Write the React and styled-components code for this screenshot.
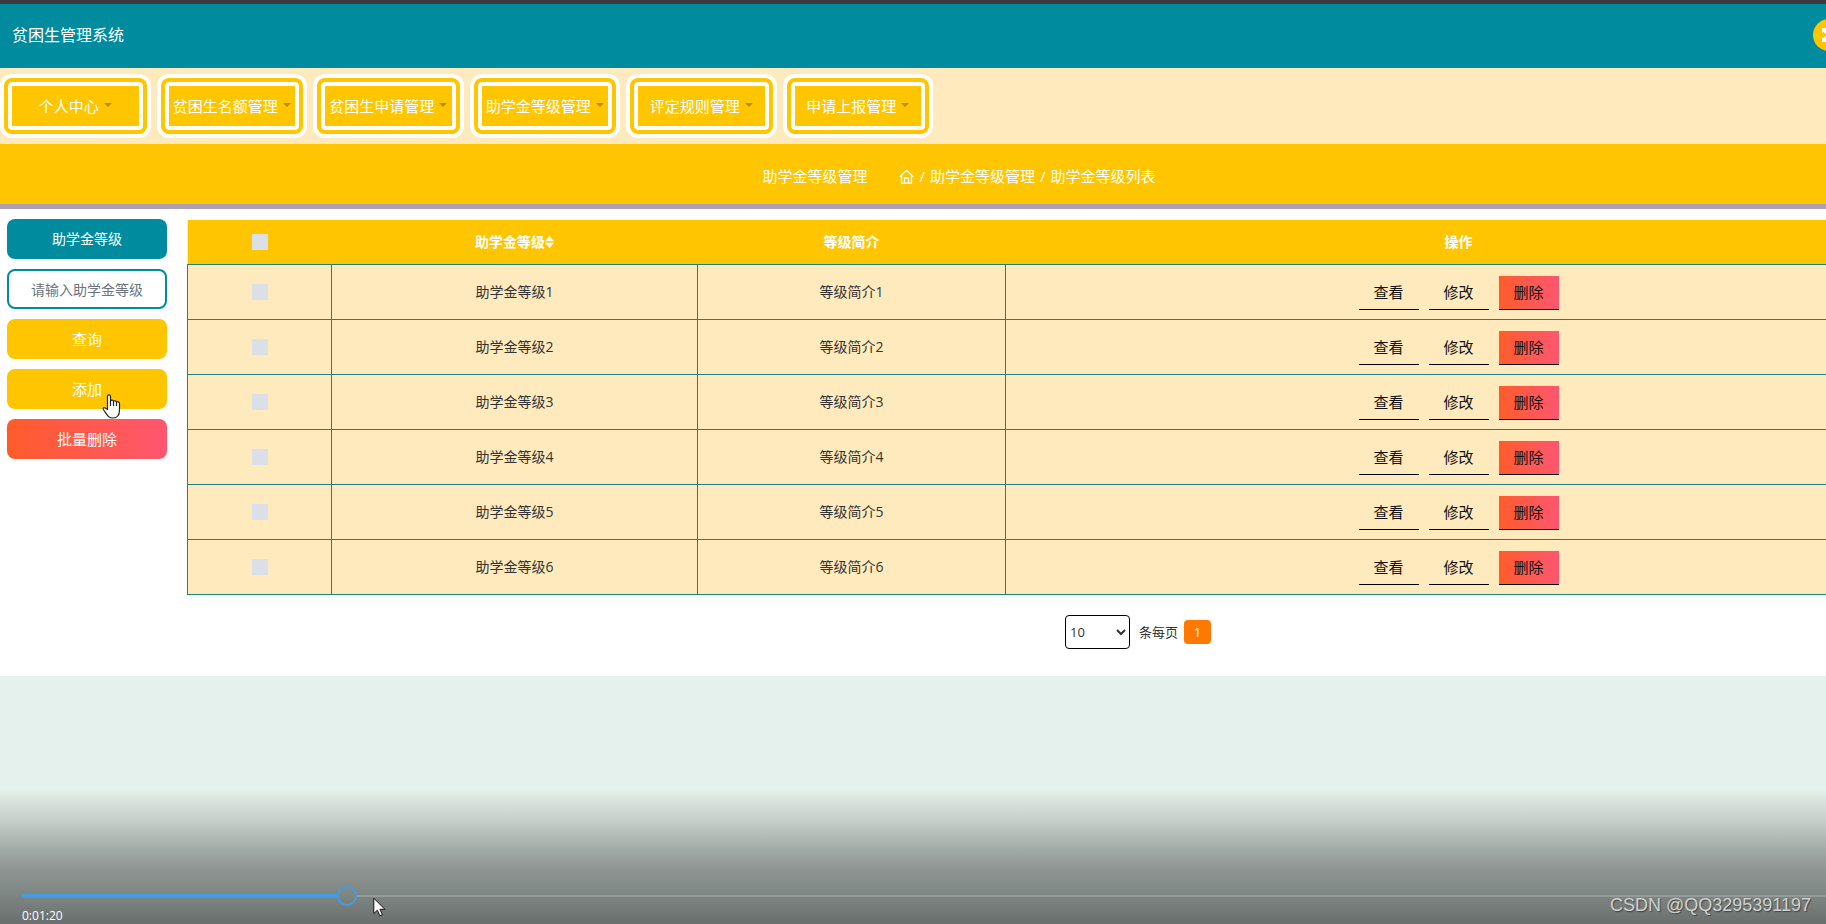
import React, { useState } from 'react';
import styled, { createGlobalStyle, css } from 'styled-components';

const teal = '#008c9e';
const yellow = '#ffc600';
const cream = '#feeabd';
const danger = 'linear-gradient(90deg, #ff5c2b, #ff5670)';

const GlobalStyle = createGlobalStyle`
  *, *::before, *::after { box-sizing: border-box; }
  html, body { margin: 0; }
  body {
    background: #e5f1ed;
    font-family: "Open Sans", "Noto Sans CJK SC", sans-serif;
    font-size: 14px;
    line-height: 20px;
    color: #333;
    overflow: hidden;
  }
  button, input, select { font: inherit; margin: 0; }
`;

const Screen = styled.div`
  position: relative;
  height: 100vh;
  overflow: hidden;
`;

const Page = styled.div`
  width: calc(100% + 94px);
`;

const TopStrip = styled.div`
  height: 4px;
  background: #3b393d;
`;

const Header = styled.header`
  display: flex;
  align-items: center;
  justify-content: space-between;
  height: 64px;
  padding: 0 75px 2px 12px;
  background: ${teal};
`;

const SiteTitle = styled.h1`
  margin: 0;
  font-size: 16px;
  font-weight: 400;
  color: #fff;
`;

const RoundButton = styled.button`
  display: grid;
  place-items: center;
  width: 32px;
  height: 32px;
  padding: 0;
  border: 0;
  border-radius: 50%;
  background: ${yellow};
  color: #fff;
`;

const NavBar = styled.nav`
  height: 76px;
  padding: 6px 0;
  background: ${cream};
`;

const NavList = styled.div`
  display: grid;
  grid-template-columns: repeat(6, 1fr);
  gap: 6px;
  max-width: 933px;
`;

const NavButton = styled.button`
  display: flex;
  align-items: center;
  justify-content: center;
  gap: 5px;
  height: 56px;
  margin: 4px;
  padding: 0;
  border: 4px solid ${yellow};
  border-radius: 8px;
  background: ${yellow};
  box-shadow: 0 0 0 4px #fff, inset 0 0 0 4px #fff;
  color: #fff;
  font-size: 15px;
  white-space: nowrap;
`;

const Caret = styled.span`
  margin-bottom: 2px;
  border: 4px solid transparent;
  border-top-color: #b98b1c;
  border-bottom: 0;
`;

const Crumbs = styled.div`
  display: flex;
  align-items: center;
  justify-content: center;
  gap: 32px;
  height: 65px;
  padding: 4px 2px 0 0;
  border-bottom: 5px solid #ad9fb0;
  background: ${yellow};
  color: #fff;
  font-size: 15px;
`;

const CrumbTrail = styled.nav`
  display: flex;
  align-items: center;
  gap: 5px;
`;

const CrumbLink = styled.a`
  display: flex;
  color: inherit;
  text-decoration: none;
`;

const Main = styled.main`
  display: flex;
  gap: 20px;
  padding: 10px 8px 26px 7px;
  background: #fff;
`;

const Side = styled.form`
  display: flex;
  flex-direction: column;
  flex: none;
  gap: 10px;
  width: 160px;
`;

const sideItem = css`
  width: 100%;
  height: 40px;
  padding: 0;
  border: 0;
  border-radius: 8px;
  text-align: center;
`;

const SideLabel = styled.label`
  ${sideItem}
  background: ${teal};
  color: #fff;
  line-height: 40px;
`;

const SideInput = styled.input`
  ${sideItem}
  border: 2px solid ${teal};
  background: #fff;
  &::placeholder { color: #6c757d; opacity: 1; }
`;

const SideButton = styled.button`
  ${sideItem}
  background: ${(p) => (p.$danger ? danger : yellow)};
  color: #fff;
  font-size: 15px;
`;

const Content = styled.section`
  flex: 1;
  min-width: 0;
  padding-top: 1px;
`;

const Table = styled.table`
  width: 100%;
  table-layout: fixed;
  border-collapse: collapse;
  background: ${cream};
  text-align: center;
`;

const Col = styled.col`
  width: ${(p) => p.$width};
`;

const HeadRow = styled.tr`
  height: 44px;
  background: ${yellow};
  color: #fff;
`;

const Th = styled.th`
  padding: 0;
  font-weight: 700;
`;

const SortLabel = styled.span`
  display: inline-flex;
  align-items: center;
`;

const Row = styled.tr`
  height: 55px;
`;

const Td = styled.td`
  padding: 0;
  border: 1px solid #1e837f;
`;

const Check = styled.input`
  display: block;
  appearance: none;
  width: 16px;
  height: 16px;
  margin: 0 auto;
  background: #dbe0e8;
`;

const Actions = styled.div`
  display: flex;
  justify-content: center;
  gap: 10px;
  padding-top: 2px;
`;

const ActionButton = styled.button`
  width: 60px;
  height: 34px;
  padding: 0;
  border: 0;
  border-bottom: 1px solid #000;
  background: ${(p) => (p.$danger ? danger : 'transparent')};
  color: #111;
  font-size: 15px;
`;

const Pager = styled.div`
  display: flex;
  align-items: center;
  justify-content: center;
  padding: 20px 0 1px 177px;
  font-size: 13px;
`;

const PageSize = styled.label`
  display: flex;
  align-items: center;
  gap: 9px;
`;

const SizeSelect = styled.select`
  width: 65px;
  height: 34px;
  padding: 0;
  border: 1px solid #000;
  border-radius: 4px;
  background: #fff;
  color: #333;
`;

const PageButton = styled.button`
  width: 27px;
  height: 24px;
  margin-left: 6px;
  padding: 0;
  border: 0;
  border-radius: 4px;
  background: #ff7800;
  color: #fff;
`;

const Player = styled.div`
  position: absolute;
  inset: auto 0 0 0;
  height: 134px;
  padding: 96px 0 0 22px;
  background: linear-gradient(
    #e5f1ed, #d6e0d9 10%, #c9d0cc 22%, #aeb7b3 37%,
    #979e9b 52%, #8e9491 60%, #7f8784 77%, #696f6d
  );
`;

const Seek = styled.input`
  display: block;
  appearance: none;
  width: 100%;
  height: 20px;
  background:
    linear-gradient(#429ce3, #429ce3) left center / var(--played) 4px no-repeat,
    linear-gradient(#949b98, #949b98) right center / calc(100% - var(--played) - 20px) 2px no-repeat;
  &::-webkit-slider-thumb {
    appearance: none;
    width: 20px;
    height: 20px;
    border: 2px solid #429ce3;
    border-radius: 50%;
    background: transparent;
  }
`;

const Time = styled.div`
  color: #fff;
  font-size: 12px;
  line-height: 16px;
  padding-top: 2px;
`;

const Watermark = styled.div`
  position: absolute;
  right: 15px;
  bottom: 9px;
  color: #cfd2d1;
  font-family: "Liberation Sans", sans-serif;
  font-size: 18px;
  text-shadow: 1px 1px 1px #444;
`;

const Pointer = styled.svg`
  position: absolute;
  left: ${(p) => p.$x}px;
  ${(p) => (p.$bottom ? `bottom: ${p.$bottom}px` : `top: ${p.$y}px`)};
  pointer-events: none;
`;

const menus = ['个人中心', '贫困生名额管理', '贫困生申请管理', '助学金等级管理', '评定规则管理', '申请上报管理'];
const rows = [1, 2, 3, 4, 5, 6];

const ExpandIcon = () => (
  <svg width="14" height="14" viewBox="0 0 14 14" fill="currentColor">
    <path d="M0 0h5L3.700 1.300 6 3.600 3.600 6 1.300 3.700 0 5zM14 0v5l-1.300-1.300L10.400 6 8 3.600l2.300-2.300L9 0zM0 14V9l1.300 1.300L3.600 8 6 10.400l-2.300 2.300L5 14zM14 14H9l1.300-1.300L8 10.400 10.400 8l2.300 2.300L14 9z" />
  </svg>
);

const HomeIcon = () => (
  <svg width="15" height="15" viewBox="0 0 15 15" fill="none" stroke="currentColor" strokeWidth="1.300">
    <path d="M.7 7.800 7.500 1.300l6.800 6.500M2.500 6.500v7.600h10V6.500M5.500 14V9h4v5" />
  </svg>
);

const SortIcon = () => (
  <svg width="9" height="12" viewBox="0 0 9 12" fill="currentColor">
    <path d="M4.500 0 9 5.300H0zM4.500 12 0 6.700h9z" />
  </svg>
);

export default function App() {
  const [time, setTime] = useState(80);
  const duration = 453;
  return (
    <Screen>
      <GlobalStyle />
      <Page>
        <TopStrip />
        <Header>
          <SiteTitle>贫困生管理系统</SiteTitle>
          <RoundButton type="button" aria-label="全屏"><ExpandIcon /></RoundButton>
        </Header>
        <NavBar>
          <NavList>
            {menus.map((m) => (
              <NavButton key={m} type="button">{m}<Caret /></NavButton>
            ))}
          </NavList>
        </NavBar>
        <Crumbs>
          <span>助学金等级管理</span>
          <CrumbTrail>
            <CrumbLink href="#home" aria-label="首页"><HomeIcon /></CrumbLink>
            <span>/</span>
            <CrumbLink href="#levels">助学金等级管理</CrumbLink>
            <span>/</span>
            <span>助学金等级列表</span>
          </CrumbTrail>
        </Crumbs>
        <Main>
          <Side onSubmit={(e) => e.preventDefault()}>
            <SideLabel htmlFor="level">助学金等级</SideLabel>
            <SideInput id="level" type="text" placeholder="请输入助学金等级" />
            <SideButton type="submit">查询</SideButton>
            <SideButton type="button">添加</SideButton>
            <SideButton type="button" $danger>批量删除</SideButton>
          </Side>
          <Content>
            <Table>
              <colgroup>
                <Col $width="144px" />
                <Col $width="366px" />
                <Col $width="308px" />
                <Col $width="auto" />
              </colgroup>
              <thead>
                <HeadRow>
                  <Th><Check type="checkbox" aria-label="全选" /></Th>
                  <Th><SortLabel>助学金等级<SortIcon /></SortLabel></Th>
                  <Th>等级简介</Th>
                  <Th>操作</Th>
                </HeadRow>
              </thead>
              <tbody>
                {rows.map((n) => (
                  <Row key={n}>
                    <Td><Check type="checkbox" aria-label={`选择助学金等级${n}`} /></Td>
                    <Td>助学金等级{n}</Td>
                    <Td>等级简介{n}</Td>
                    <Td>
                      <Actions>
                        <ActionButton type="button">查看</ActionButton>
                        <ActionButton type="button">修改</ActionButton>
                        <ActionButton type="button" $danger>删除</ActionButton>
                      </Actions>
                    </Td>
                  </Row>
                ))}
              </tbody>
            </Table>
            <Pager>
              <PageSize>
                <SizeSelect defaultValue="10">
                  <option>10</option>
                  <option>20</option>
                  <option>50</option>
                </SizeSelect>
                条每页
              </PageSize>
              <PageButton type="button">1</PageButton>
            </Pager>
          </Content>
        </Main>
      </Page>
      <Player>
        <Seek
          type="range"
          aria-label="播放进度"
          min="0"
          max={duration}
          value={time}
          onChange={(e) => setTime(Number(e.target.value))}
          style={{ '--played': `calc((100% - 20px) * ${time / duration})` }}
        />
        <Time>0:01:20</Time>
      </Player>
      <Watermark>CSDN @QQ3295391197</Watermark>
      <Pointer $x={102} $y={394} width="19" height="25" viewBox="0 0 19 25" fill="#fff" stroke="#222" strokeWidth="1.200" strokeLinejoin="round">
        <path d="M5.500 15.500V2.500C5.500.3 8.500.3 8.500 2.500V7c.5-1.500 3-1.200 3 .5.6-1.200 2.900-.9 3 .8.8-1 3-.7 3 1.200V16c0 5-2.500 8-6.500 8-4.500 0-5.500-2.500-9-7.500C.3 14.300 1.500 13 3.300 14zM8.500 7v5M11.500 7.500V12M14.500 8.500V12" />
      </Pointer>
      <Pointer $x={373} $bottom={7} width="13" height="20" viewBox="0 0 13 20" fill="#fff" stroke="#111" strokeWidth="1">
        <path d="M.8 1.200v15.300l3.600-3.300 2.500 5.600 2.500-1.100-2.500-5.400h5z" />
      </Pointer>
    </Screen>
  );
}
